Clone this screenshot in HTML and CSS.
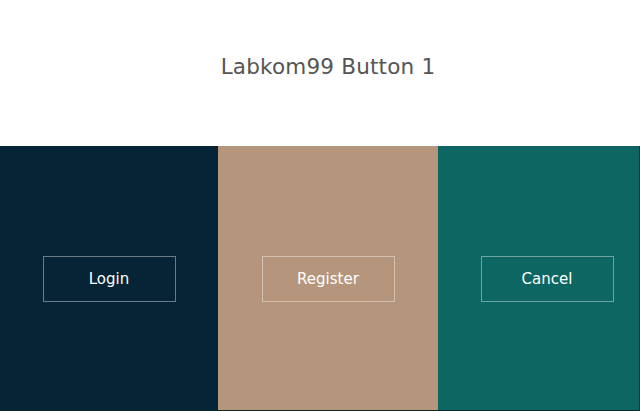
FILE: index.html
```html
<!DOCTYPE html>
<html lang="en">
<head>
    <meta charset="UTF-8">
    <meta name="viewport" content="width=device-width, initial-scale=1.0">
    <title>Labkom99 Button 1</title>
    <link rel="stylesheet" href="styles.css">
</head>
<body>
    <header class="title-bar">
        <h1>Labkom99 Button 1</h1>
    </header>

    <div class="panels">
        <div class="panel panel-dark">
            <button class="btn">Login</button>
        </div>
        <div class="panel panel-sand">
            <button class="btn">Register</button>
        </div>
        <div class="panel panel-teal">
            <button class="btn">Cancel</button>
        </div>
    </div>
</body>
</html>
```

FILE: styles.css
```css
html {
    overflow: hidden;
}
body {
    margin: 0;
    width: 656px;
    font-family: "DejaVu Sans", Verdana, sans-serif;
    background-color: #fff;
}
.title-bar {
    height: 146px;
    box-sizing: border-box;
    padding-bottom: 14px;
    display: flex;
    align-items: center;
    justify-content: center;
}
.title-bar h1 {
    margin: 0;
    font-size: 21.5px;
    font-weight: normal;
    color: #555;
    letter-spacing: 0.2px;
}
.panels {
    display: flex;
    width: 640px;
    height: 265px;
    overflow: hidden;
    border-right: 1px solid #0a3a38;
    border-bottom: 1px solid #0a2a2a;
    box-sizing: border-box;
}
.panel {
    flex: 0 0 218px;
    display: flex;
    align-items: center;
    justify-content: center;
}
.panel-dark {
    background-color: #062435;
}
.panel-sand {
    flex-basis: 220px;
    background-color: #b5967c;
}
.panel-teal {
    background-color: #0e6662;
}
.btn {
    width: 133px;
    height: 46px;
    margin-top: 1px;
    background: transparent;
    border: 1px solid rgba(255, 255, 255, 0.4);
    color: #fff;
    font-family: "DejaVu Sans", Verdana, sans-serif;
    font-size: 15px;
    padding: 0;
    cursor: pointer;
}
```
